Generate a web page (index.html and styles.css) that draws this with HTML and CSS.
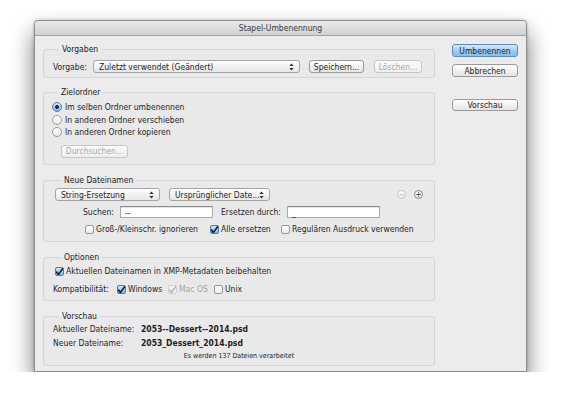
FILE: index.html
```html
<!DOCTYPE html>
<html>
<head>
	<meta charset="utf-8" />
	<title>Stapel-Umbenennung</title>
	<link rel="stylesheet" href="styles.css">
</head>
<body>

<div class="window">
	<div class="titlebar">Stapel-Umbenennung</div>

	<div class="content">
		<div class="main">

			<fieldset class="group g-presets">
				<legend>Vorgaben</legend>
				<div class="row">
					<span class="label">Vorgabe:</span>
					<div class="select sel-preset">Zuletzt verwendet (Geändert)<span class="arrows"></span></div>
					<button class="btn btn-save">Speichern...</button>
					<button class="btn btn-delete" disabled>Löschen...</button>
				</div>
			</fieldset>

			<fieldset class="group g-target">
				<legend>Zielordner</legend>
				<div class="radio on"><span class="dot"></span>Im selben Ordner umbenennen</div>
				<div class="radio"><span class="dot"></span>In anderen Ordner verschieben</div>
				<div class="radio"><span class="dot"></span>In anderen Ordner kopieren</div>
				<button class="btn btn-browse" disabled>Durchsuchen...</button>
			</fieldset>

			<fieldset class="group g-names">
				<legend>Neue Dateinamen</legend>
				<div class="row">
					<div class="select sel-type">String-Ersetzung<span class="arrows"></span></div>
					<div class="select sel-source">Ursprünglicher Date...<span class="arrows"></span></div>
					<span class="spacer"></span>
					<span class="circle minus">&minus;</span>
					<span class="circle plus">+</span>
				</div>
				<div class="row row-find">
					<span class="label lbl-find">Suchen:</span>
					<div class="input">--</div>
					<span class="label lbl-replace">Ersetzen durch:</span>
					<div class="input">_</div>
				</div>
				<div class="row row-checks">
					<span class="check cb-case"><span class="box"></span>Groß-/Kleinschr. ignorieren</span>
					<span class="check on cb-all"><span class="box"></span>Alle ersetzen</span>
					<span class="check cb-regex"><span class="box"></span>Regulären Ausdruck verwenden</span>
				</div>
			</fieldset>

			<fieldset class="group g-options">
				<legend>Optionen</legend>
				<div class="row">
					<span class="check on"><span class="box"></span>Aktuellen Dateinamen in XMP-Metadaten beibehalten</span>
				</div>
				<div class="row row-compat">
					<span class="label">Kompatibilität:</span>
					<span class="check on cb-win"><span class="box"></span>Windows</span>
					<span class="check on disabled cb-mac"><span class="box"></span>Mac OS</span>
					<span class="check"><span class="box"></span>Unix</span>
				</div>
			</fieldset>

			<fieldset class="group g-preview">
				<legend>Vorschau</legend>
				<div class="row name-row">
					<span class="label">Aktueller Dateiname:</span>
					<span class="value">2053--Dessert--2014.psd</span>
				</div>
				<div class="row name-row">
					<span class="label">Neuer Dateiname:</span>
					<span class="value">2053_Dessert_2014.psd</span>
				</div>
				<div class="count">Es werden 137 Dateien verarbeitet</div>
			</fieldset>

		</div>

		<div class="side">
			<button class="btn btn-default">Umbenennen</button>
			<button class="btn btn-cancel">Abbrechen</button>
			<button class="btn btn-preview">Vorschau</button>
		</div>
	</div>
</div>

</body>
</html>
```

FILE: styles.css
```css
body {
	margin: 0;
	padding: 0;
	background: #ffffff;
	font-family: "DejaVu Sans Condensed", "DejaVu Sans", sans-serif;
	font-size: 8.5px;
	color: #1e1e1e;
}

.window {
	margin: 20px 0 0 34px;
	width: 493px;
	height: 352px;
	background: #ececec;
	border: 1px solid #8e8e8e;
	border-radius: 4px 4px 0 0;
	box-sizing: border-box;
	box-shadow: 0 12px 22px rgba(0, 0, 0, 0.55), 0 0 3px rgba(0, 0, 0, 0.25);
}

.titlebar {
	height: 14px;
	line-height: 14px;
	text-align: center;
	color: #3a3a3a;
	background: linear-gradient(#eaeaea, #d2d2d2);
	border-bottom: 1px solid #a3a3a3;
	border-radius: 4px 4px 0 0;
}

.content {
	display: flex;
	padding: 8px 8px 0 8px;
}

.main {
	width: 392px;
}

.side {
	display: flex;
	flex-direction: column;
	margin-left: 17px;
	width: 66px;
}

/* group boxes */
.group {
	margin: 0 0 9px 0;
	padding: 0;
	min-inline-size: 0;
	border: 1px solid #d6d6d6;
	border-radius: 3px;
	background: #e9e9e9;
}
.group legend {
	margin-left: 6px;
	padding: 0 3px;
	line-height: 11px;
	color: #222;
}

.row {
	display: flex;
	align-items: center;
	height: 13px;
}
.row > * {
	flex-shrink: 0;
}

.label {
	white-space: nowrap;
}

.g-presets { padding: 5px 0 4px 9px; }
.g-presets .label { width: 40px; }
.sel-preset { width: 207px; margin-right: 9px; }
.btn-save { width: 55px; margin-right: 10px; }
.btn-delete { width: 48px; }

.g-target { padding: 3px 0 6px 8px; }
.g-target .btn-browse { width: 67px; margin: 6px 0 0 9px; }

.g-names { padding: 2px 11px 5px 11px; margin-top: 10px; }
.sel-type { width: 105px; margin-right: 9px; }
.sel-source { width: 101px; }
.spacer { flex: 1; }
.row-find { margin-top: 5px; height: 12px; }
.lbl-find { margin-left: 28px; width: 37px; }
.lbl-replace { margin-left: 8px; width: 66px; }
.row-checks { margin-top: 5px; }
.cb-case { margin-left: 30px; width: 125px; }
.cb-all { width: 71px; }

.g-options { padding: 2px 0 4px 11px; margin-top: 10px; }
.row-compat { margin-top: 5px; }
.row-compat .label { margin-left: -2px; width: 64px; }
.cb-win { width: 51px; }
.cb-mac { width: 46px; }

.g-preview { padding: 1px 0 3px 9px; margin-top: 10px; }
.name-row { margin-bottom: 1px; }
.name-row .label { width: 88px; }
.name-row .value { font-weight: bold; }
.count {
	font-size: 7px;
	text-align: center;
	margin-top: 1px;
	margin-left: -9px;
	line-height: 11px;
}

/* controls */
.btn {
	height: 13px;
	padding: 0;
	font-family: inherit;
	font-size: 8.5px;
	color: #1e1e1e;
	background: linear-gradient(#ffffff, #f1f1f1 50%, #e4e4e4);
	border: 1px solid #9a9a9a;
	border-radius: 3px;
	white-space: nowrap;
}
.btn:disabled {
	color: #a8a8a8;
	border-color: #c6c6c6;
	background: linear-gradient(#fbfbfb, #efefef);
}
.btn-default {
	background: linear-gradient(#d6ebfc, #a3cdf3 50%, #86bdef);
	border-color: #5e8cc2;
}
.btn-cancel { margin-top: 7px; }
.btn-preview { margin-top: 22px; height: 12px; }

.select {
	position: relative;
	height: 13px;
	line-height: 12px;
	box-sizing: border-box;
	padding-left: 5px;
	white-space: nowrap;
	background: linear-gradient(#ffffff, #f2f2f2 50%, #e7e7e7);
	border: 1px solid #a4a4a4;
	border-radius: 3px;
}
.arrows {
	position: absolute;
	right: 5px;
	top: 2px;
	width: 5px;
	height: 8px;
	background: url("data:image/svg+xml,%3Csvg xmlns='http://www.w3.org/2000/svg' viewBox='0 0 5 8'%3E%3Cpath d='M0.3 3 L2.5 0.4 L4.7 3 Z M0.3 5 L2.5 7.6 L4.7 5 Z' fill='%23333'/%3E%3C/svg%3E") center / 5px 8px no-repeat;
}

.input {
	width: 93px;
	height: 12px;
	line-height: 12px;
	box-sizing: border-box;
	padding-left: 4px;
	background: #fff;
	border: 1px solid #a9a9a9;
	border-top-color: #8c8c8c;
	box-shadow: inset 0 1px 1px rgba(0, 0, 0, 0.12);
}

.circle {
	width: 9px;
	height: 9px;
	box-sizing: border-box;
	border-radius: 50%;
	border: 1px solid #8a8a8a;
	font-size: 8px;
	line-height: 7px;
	text-align: center;
	color: #333;
	background: linear-gradient(#fff, #e6e6e6);
}
.circle.minus {
	border-color: #c9c9c9;
	color: #c0c0c0;
	margin-right: 8px;
}

.radio {
	display: flex;
	align-items: center;
	height: 12.5px;
}
.radio .dot {
	width: 10px;
	height: 10px;
	box-sizing: border-box;
	margin-right: 3px;
	border-radius: 50%;
	border: 1px solid #9a9a9a;
	background: linear-gradient(#ffffff, #e9e9e9);
}
.radio.on .dot {
	border-color: #5479a8;
	background: radial-gradient(circle, #1b2a40 0 1.6px, transparent 2.2px), linear-gradient(#cfe6fb, #86b8ea);
}

.check {
	display: inline-flex;
	align-items: center;
	white-space: nowrap;
}
.check .box {
	width: 9px;
	height: 9px;
	box-sizing: border-box;
	margin-right: 2px;
	border: 1px solid #9a9a9a;
	border-radius: 2px;
	background: linear-gradient(#ffffff, #e9e9e9);
}
.check.on .box {
	border-color: #5479a8;
	background:
		url("data:image/svg+xml,%3Csvg xmlns='http://www.w3.org/2000/svg' viewBox='0 0 9 9'%3E%3Cpath d='M1.2 4.6 L3.4 7.4 L8.6 0.4' fill='none' stroke='%23141e2e' stroke-width='1.6'/%3E%3C/svg%3E") center / 9px 9px no-repeat,
		linear-gradient(#cfe6fb, #86b8ea);
}
.check.disabled {
	color: #a5a5a5;
}
.check.on.disabled .box {
	border-color: #d0d0d0;
	background:
		url("data:image/svg+xml,%3Csvg xmlns='http://www.w3.org/2000/svg' viewBox='0 0 9 9'%3E%3Cpath d='M1.2 4.6 L3.4 7.4 L8.6 0.4' fill='none' stroke='%23a8a8a8' stroke-width='1.2'/%3E%3C/svg%3E") center / 9px 9px no-repeat,
		linear-gradient(#f6f6f6, #ececec);
}
```
